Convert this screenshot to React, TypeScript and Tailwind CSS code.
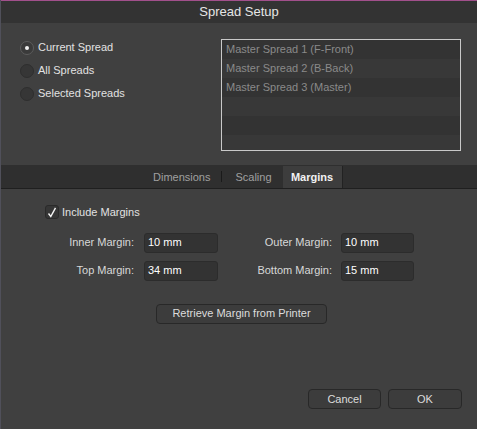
import React from 'react';

const font = { fontFamily: '"Liberation Sans", Arial, sans-serif' };

const Radio = ({ label, checked }: { label: string; checked?: boolean }) => (
  <div className="flex items-center h-[23px]">
    <div
      className={
        'w-[14px] h-[14px] rounded-full flex items-center justify-center ' +
        (checked ? 'bg-[#3a3a3a] border border-[#5c5c5c]' : 'bg-[#363636] border border-[#2e2e2e]')
      }
    >
      {checked && <div className="w-[4px] h-[4px] rounded-full bg-[#f0f0f0]" />}
    </div>
    <span className="ml-[4px] text-[11px] text-[#e2e2e2]">{label}</span>
  </div>
);

const Field = ({ value }: { value: string }) => (
  <div className="h-[20px] bg-[#333333] border border-[#2c2c2c] rounded-[3px] flex items-center px-[3px] text-[11px] text-white">
    {value}
  </div>
);

export default function App() {
  const rows = ['Master Spread 1 (F-Front)', 'Master Spread 2 (B-Back)', 'Master Spread 3 (Master)', '', '', ''];
  return (
    <div style={font} className="w-[477px] h-[429px] bg-[#404040] flex flex-col border-l border-[#50505a] overflow-hidden">
      <div className="h-[23px] shrink-0 bg-[#333333] border-t border-[#a2508c] flex items-center justify-center text-[13px] text-[#e6e6e6]">
        Spread Setup
      </div>

      <div className="h-[142px] shrink-0 flex">
        <div className="pl-[19px] pt-[13px] flex flex-col">
          <Radio label="Current Spread" checked />
          <Radio label="All Spreads" />
          <Radio label="Selected Spreads" />
        </div>
        <div className="ml-auto mr-[16px] mt-[16px] w-[240px] h-[112px] border border-[#c9c9c9] bg-[#333333] overflow-hidden">
          {rows.map((r, i) => (
            <div
              key={i}
              className={'h-[19px] flex items-center px-[4px] text-[11px] text-[#8a8a8a] ' + (i % 2 === 0 ? 'bg-[#333333]' : 'bg-[#383838]')}
            >
              {r}
            </div>
          ))}
        </div>
      </div>

      <div className="h-[24px] shrink-0 bg-[#2f2f2f] border-b border-[#1f1f1f] flex items-end">
        <div className="ml-[152px] h-[22px] flex items-center text-[11px] text-[#a0a0a0]">Dimensions</div>
        <div className="ml-[11px] mb-[6px] w-px h-[11px] bg-[#1a1a1a]" />
        <div className="ml-[13px] h-[22px] flex items-center text-[11px] text-[#a0a0a0]">Scaling</div>
        <div className="ml-[11px] w-[60px] h-[22px] bg-[#3d3d3d] border-r border-[#222] flex items-center justify-center text-[11px] font-semibold text-[#f2f2f2]">
          Margins
        </div>
      </div>

      <div className="flex flex-col pl-[43px] pt-[15px]">
        <div className="flex items-center ml-[1px]">
          <div className="w-[14px] h-[14px] rounded-[3px] bg-[#363636] border border-[#2a2a2a] flex items-center justify-center">
            <svg width="10" height="11" viewBox="0 0 10 11">
              <path d="M1.5 6.5 L3.8 9.5 L8.5 0.8" fill="none" stroke="#f5f5f5" strokeWidth="1.4" />
            </svg>
          </div>
          <span className="ml-[3px] text-[11px] text-[#e2e2e2]">Include Margins</span>
        </div>

        <div className="flex flex-col gap-[8px] mt-[12px]">
          <div className="flex items-center">
            <span className="w-[90px] text-right text-[11px] text-[#d8d8d8]">Inner Margin:</span>
            <div className="ml-[10px] w-[74px]"><Field value="10 mm" /></div>
            <span className="w-[114px] text-right text-[11px] text-[#d8d8d8]">Outer Margin:</span>
            <div className="ml-[9px] w-[73px]"><Field value="10 mm" /></div>
          </div>
          <div className="flex items-center">
            <span className="w-[90px] text-right text-[11px] text-[#d8d8d8]">Top Margin:</span>
            <div className="ml-[10px] w-[74px]"><Field value="34 mm" /></div>
            <span className="w-[114px] text-right text-[11px] text-[#d8d8d8]">Bottom Margin:</span>
            <div className="ml-[9px] w-[73px]"><Field value="15 mm" /></div>
          </div>
        </div>

        <div className="ml-[112px] mt-[23px] w-[171px] h-[20px] rounded-[4px] bg-[#3c3c3c] border border-[#282828] flex items-center justify-center text-[11px] text-[#dcdcdc]">
          Retrieve Margin from Printer
        </div>
      </div>

      <div className="mt-auto mb-[20px] mr-[15px] flex justify-end gap-[7px]">
        <div className="w-[73px] h-[20px] rounded-[4px] bg-[#3c3c3c] border border-[#282828] flex items-center justify-center text-[11px] text-[#dcdcdc]">
          Cancel
        </div>
        <div className="w-[74px] h-[20px] rounded-[4px] bg-[#3c3c3c] border border-[#282828] flex items-center justify-center text-[11px] text-[#dcdcdc]">
          OK
        </div>
      </div>
    </div>
  );
}
